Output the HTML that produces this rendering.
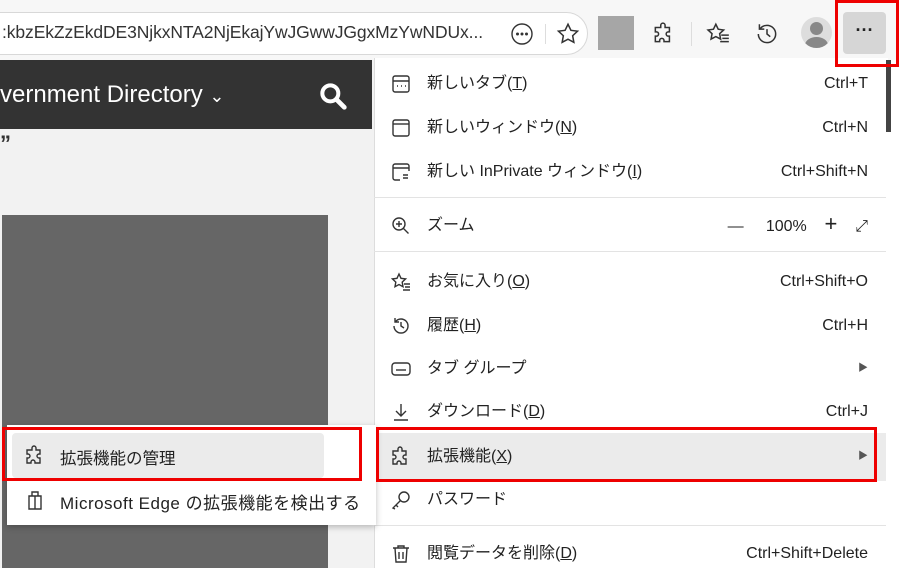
<!DOCTYPE html>
<html><head><meta charset="utf-8"><style>
*{margin:0;padding:0;box-sizing:border-box}
body{width:899px;height:568px;overflow:hidden;background:#fff;position:relative;font-family:"Liberation Sans","Noto Sans CJK JP",sans-serif;color:#222}
.a{position:absolute}
.it{position:absolute;left:374px;width:512px;height:44px;font-size:16px}
.it .ic{position:absolute;left:16px;top:11px;width:22px;height:22px}
.it .t{position:absolute;left:53px;top:11px;line-height:22px}
.it .k{position:absolute;right:18px;top:11px;line-height:22px;font-size:16px}
.sep{position:absolute;left:374px;width:512px;height:1px;background:#e3e3e3}
svg{fill:none;stroke:#333;stroke-width:1.4}
.red{position:absolute;border:3px solid #e00}
</style></head><body>
<div class="a" style="left:0;top:0;width:899px;height:60px;background:#f7f7f7"></div>
<div class="a" style="left:-20px;top:12px;width:608px;height:43px;background:#fff;border:1px solid #d8d8d8;border-radius:22px"></div>
<div class="a" style="left:2px;top:22px;font-size:17.5px;color:#333;letter-spacing:-0.1px">:kbzEkZzEkdDE3NjkxNTA2NjEkajYwJGwwJGgxMzYwNDUx...</div>
<svg class="a" style="left:510px;top:22px" width="24" height="24" viewBox="0 0 24 24"><circle cx="12" cy="12" r="10"/><circle cx="7.5" cy="12" r=".8" fill="#333"/><circle cx="12" cy="12" r=".8" fill="#333"/><circle cx="16.5" cy="12" r=".8" fill="#333"/></svg>
<div class="a" style="left:545px;top:24px;width:1px;height:20px;background:#ddd"></div>
<svg class="a" style="left:555px;top:21px" width="26" height="26" viewBox="0 0 24 24"><path d="M12 3l2.7 5.6 6.1.8-4.5 4.2 1.1 6.1L12 16.8l-5.4 2.9 1.1-6.1-4.5-4.2 6.1-.8z"/></svg>
<div class="a" style="left:598px;top:16px;width:36px;height:34px;background:#a6a6a6"></div>
<svg class="a" style="left:651px;top:21px" width="26" height="26" viewBox="0 0 24 24"><path d="M9 4a2 2 0 014 0v2h4v4h-1a2 2 0 000 4h1v5h-5v-1a2 2 0 00-4 0v1H4v-5h1a2 2 0 000-4H4V6h5z"/></svg>
<div class="a" style="left:691px;top:22px;width:1px;height:24px;background:#ddd"></div>
<svg class="a" style="left:705px;top:21px" width="26" height="26" viewBox="0 0 24 24"><path d="M10 3l2.2 4.6 5 .7-3.7 3.4.9 5L10 14.4 5.6 16.7l.9-5L2.8 8.3l5-.7zM15 13h7M16 16h6M14 19h8"/></svg>
<svg class="a" style="left:754px;top:21px" width="26" height="26" viewBox="0 0 24 24"><path d="M4 12a8 8 0 108-8 8 8 0 00-6.5 3.3M5 3v4.5h4.5M12 7.5V12l3 2.5"/></svg>
<div class="a" style="left:801px;top:17px;width:31px;height:31px;border-radius:50%;background:#ddd;overflow:hidden"><div class="a" style="left:9px;top:5px;width:13px;height:13px;border-radius:50%;background:#888"></div><div class="a" style="left:4px;top:20px;width:23px;height:16px;border-radius:50%;background:#888"></div></div>
<div class="a" style="left:843px;top:12px;width:43px;height:42px;background:#d6d6d6;border-radius:4px;font-size:18px;text-align:center;line-height:36px;font-weight:bold">···</div>
<div class="a" style="left:0;top:60px;width:374px;height:508px;background:#f2f2f2"></div>
<div class="a" style="left:0;top:60px;width:372px;height:69px;background:#333"></div>
<div class="a" style="left:0;top:81px;font-size:24px;color:#fff">vernment Directory <span style="font-size:18px">&#8964;</span></div>
<svg class="a" style="left:317px;top:80px" width="32" height="32" viewBox="0 0 24 24"><circle cx="10" cy="10" r="6" stroke="#fff" stroke-width="3"/><path d="M14.5 14.5l6 6" stroke="#fff" stroke-width="3.5" stroke-linecap="round"/></svg>
<div class="a" style="left:0;top:131px;font-size:22px;color:#333;font-weight:bold">”</div>
<div class="a" style="left:2px;top:215px;width:326px;height:353px;background:#666"></div>
<div class="a" style="left:374px;top:58px;width:514px;height:510px;background:#fff;border-left:1px solid #ddd"></div>
<div class="a" style="left:886px;top:60px;width:5px;height:72px;background:#444"></div>
<div class="it" style="top:62px"><svg class="ic" viewBox="0 0 22 22"><rect x="3" y="3" width="16" height="16" rx="2"/><path d="M3 8h16M7 13h1M11 13h1M15 13h1"/></svg><span class="t">新しいタブ(<u>T</u>)</span><span class="k">Ctrl+T</span></div>
<div class="it" style="top:106px"><svg class="ic" viewBox="0 0 22 22"><rect x="3" y="3" width="16" height="16" rx="2"/><path d="M3 7h16"/></svg><span class="t">新しいウィンドウ(<u>N</u>)</span><span class="k">Ctrl+N</span></div>
<div class="it" style="top:150px"><svg class="ic" viewBox="0 0 22 22"><path d="M10 19H5a2 2 0 01-2-2V5a2 2 0 012-2h12a2 2 0 012 2v5M3 7h16M13 14h5M13 17h5"/></svg><span class="t">新しい InPrivate ウィンドウ(<u>I</u>)</span><span class="k">Ctrl+Shift+N</span></div>
<div class="sep" style="top:197px"></div>
<div class="it" style="top:204px"><svg class="ic" viewBox="0 0 22 22"><circle cx="9" cy="9" r="6"/><path d="M13.5 13.5l5 5M6 9h6M9 6v6"/></svg><span class="t">ズーム</span><span class="k">—&nbsp;&nbsp;&nbsp;&nbsp;&nbsp;100%&nbsp;&nbsp;&nbsp;&nbsp;<span style="font-size:22px;line-height:18px">+</span>&nbsp;&nbsp;&nbsp;&nbsp;⤢</span></div>
<div class="sep" style="top:251px"></div>
<div class="it" style="top:260px"><svg class="ic" viewBox="0 0 22 22"><path d="M9 3l2 4.3 4.6.6-3.4 3.2.8 4.6L9 13.5l-4 2.2.8-4.6-3.4-3.2 4.6-.6zM14 13h6M15 16h5M13 19h7"/></svg><span class="t">お気に入り(<u>O</u>)</span><span class="k">Ctrl+Shift+O</span></div>
<div class="it" style="top:304px"><svg class="ic" viewBox="0 0 22 22"><path d="M4 11a7 7 0 107-7 7 7 0 00-5.7 3M5 3v4h4M11 7v4l3 2"/></svg><span class="t">履歴(<u>H</u>)</span><span class="k">Ctrl+H</span></div>
<div class="it" style="top:347px"><svg class="ic" viewBox="0 0 22 22"><rect x="2" y="5" width="18" height="12" rx="3"/><path d="M6 12h10"/></svg><span class="t">タブ グループ</span><span class="k" style="font-size:10px;color:#555">▶</span></div>
<div class="it" style="top:390px"><svg class="ic" viewBox="0 0 22 22"><path d="M11 3v12M6 10l5 5 5-5M4 19h14"/></svg><span class="t">ダウンロード(<u>D</u>)</span><span class="k">Ctrl+J</span></div>
<div class="it" style="top:433px;background:#ebebeb;height:48px"><svg class="ic" style="top:13px" viewBox="0 0 22 22"><path d="M8 3a2 2 0 014 0v2h4v4h-1a2 2 0 000 4h1v5h-5v-1a2 2 0 00-4 0v1H3v-5h1a2 2 0 000-4H3V5h5z"/></svg><span class="t" style="top:13px">拡張機能(<u>X</u>)</span><span class="k" style="font-size:10px;color:#555;top:13px">▶</span></div>
<div class="it" style="top:478px"><svg class="ic" viewBox="0 0 22 22"><circle cx="14" cy="8" r="5"/><path d="M10.5 11.5L3 19l2 1M6 16l2 2"/></svg><span class="t">パスワード</span></div>
<div class="sep" style="top:525px"></div>
<div class="it" style="top:532px"><svg class="ic" viewBox="0 0 22 22"><path d="M3 5h16M8 5V3h6v2M5 5l1 14h10l1-14M9 9v7M13 9v7"/></svg><span class="t">閲覧データを削除(<u>D</u>)</span><span class="k">Ctrl+Shift+Delete</span></div>
<div class="a" style="left:7px;top:425px;width:369px;height:100px;background:#fff;box-shadow:0 2px 6px rgba(0,0,0,.25)"></div>
<div class="a" style="left:12px;top:433px;width:312px;height:45px;background:#ebebeb;border-radius:4px"></div>
<svg class="a" style="left:24px;top:445px" width="22" height="22" viewBox="0 0 22 22"><path d="M8 3a2 2 0 014 0v2h4v4h-1a2 2 0 000 4h1v5h-5v-1a2 2 0 00-4 0v1H3v-5h1a2 2 0 000-4H3V5h5z"/></svg>
<div class="a" style="left:60px;top:445px;font-size:16.5px">拡張機能の管理</div>
<svg class="a" style="left:24px;top:489px" width="22" height="22" viewBox="0 0 22 22"><path d="M5 7h12v13H5zM8 7V3h6v4M11 7v13"/></svg>
<div class="a" style="left:60px;top:489px;font-size:17px;letter-spacing:0.5px">Microsoft Edge の拡張機能を検出する</div>
<div class="red" style="left:2px;top:427px;width:360px;height:54px"></div>
<div class="red" style="left:376px;top:427px;width:501px;height:55px"></div>
<div class="red" style="left:835px;top:0;width:64px;height:67px"></div>
</body></html>
